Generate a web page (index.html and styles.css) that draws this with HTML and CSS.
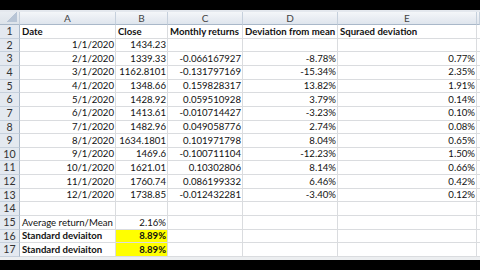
FILE: index.html
```html
<!DOCTYPE html>
<html>
<head>
<meta charset="utf-8">
<link rel="stylesheet" href="styles.css">
</head>
<body>
<div class="topbar"></div>
<div class="strip"></div>
<div class="sheet">
  <div class="ch corner"></div><div class="ch">A</div><div class="ch">B</div><div class="ch">C</div><div class="ch">D</div><div class="ch">E</div><div class="ch"></div>

  <div class="rh">1</div><div class="c b">Date</div><div class="c b">Close</div><div class="c b">Monthly returns</div><div class="c b">Deviation from mean</div><div class="c b">Squraed deviation</div><div class="c"></div>
  <div class="rh">2</div><div class="c r">1/1/2020</div><div class="c r">1434.23</div><div class="c r"></div><div class="c r"></div><div class="c r"></div><div class="c"></div>
  <div class="rh">3</div><div class="c r">2/1/2020</div><div class="c r">1339.33</div><div class="c r">-0.066167927</div><div class="c r">-8.78%</div><div class="c r">0.77%</div><div class="c"></div>
  <div class="rh">4</div><div class="c r">3/1/2020</div><div class="c r">1162.8101</div><div class="c r">-0.131797169</div><div class="c r">-15.34%</div><div class="c r">2.35%</div><div class="c"></div>
  <div class="rh">5</div><div class="c r">4/1/2020</div><div class="c r">1348.66</div><div class="c r">0.159828317</div><div class="c r">13.82%</div><div class="c r">1.91%</div><div class="c"></div>
  <div class="rh">6</div><div class="c r">5/1/2020</div><div class="c r">1428.92</div><div class="c r">0.059510928</div><div class="c r">3.79%</div><div class="c r">0.14%</div><div class="c"></div>
  <div class="rh">7</div><div class="c r">6/1/2020</div><div class="c r">1413.61</div><div class="c r">-0.010714427</div><div class="c r">-3.23%</div><div class="c r">0.10%</div><div class="c"></div>
  <div class="rh">8</div><div class="c r">7/1/2020</div><div class="c r">1482.96</div><div class="c r">0.049058776</div><div class="c r">2.74%</div><div class="c r">0.08%</div><div class="c"></div>
  <div class="rh">9</div><div class="c r">8/1/2020</div><div class="c r">1634.1801</div><div class="c r">0.101971798</div><div class="c r">8.04%</div><div class="c r">0.65%</div><div class="c"></div>
  <div class="rh">10</div><div class="c r">9/1/2020</div><div class="c r">1469.6</div><div class="c r">-0.100711104</div><div class="c r">-12.23%</div><div class="c r">1.50%</div><div class="c"></div>
  <div class="rh">11</div><div class="c r">10/1/2020</div><div class="c r">1621.01</div><div class="c r">0.10302806</div><div class="c r">8.14%</div><div class="c r">0.66%</div><div class="c"></div>
  <div class="rh">12</div><div class="c r">11/1/2020</div><div class="c r">1760.74</div><div class="c r">0.086199332</div><div class="c r">6.46%</div><div class="c r">0.42%</div><div class="c"></div>
  <div class="rh">13</div><div class="c r">12/1/2020</div><div class="c r">1738.85</div><div class="c r">-0.012432281</div><div class="c r">-3.40%</div><div class="c r">0.12%</div><div class="c"></div>
  <div class="rh">14</div><div class="c"></div><div class="c"></div><div class="c"></div><div class="c"></div><div class="c"></div><div class="c"></div>
  <div class="rh">15</div><div class="c">Average return/Mean</div><div class="c r">2.16%</div><div class="c"></div><div class="c"></div><div class="c"></div><div class="c"></div>
  <div class="rh">16</div><div class="c b">Standard deviaiton</div><div class="c r b y">8.89%</div><div class="c"></div><div class="c"></div><div class="c"></div><div class="c"></div>
  <div class="rh">17</div><div class="c b">Standard deviaiton</div><div class="c r b y">8.89%</div><div class="c"></div><div class="c"></div><div class="c"></div><div class="c"></div>
</div>
<div class="strip2"></div>
</body>
</html>
```

FILE: styles.css
```css
html, body {
  margin: 0;
  padding: 0;
  background: #000;
}
body {
  width: 480px;
  height: 270px;
  overflow: hidden;
  font-family: Lato, "Open Sans", sans-serif;
  font-size: 9.6px;
  color: #111;
}
.topbar {
  height: 10px;
  background: #000;
}
.strip {
  height: 2px;
  background: #e4e8ee;
}
.sheet {
  display: grid;
  grid-template-columns: 20px 96px 52px 75px 95px 139px 3px;
  grid-template-rows: 13px repeat(17, 1fr);
  height: 245px;
  background: #fff;
}
.ch {
  background: linear-gradient(#f4f6f9, #dfe5ed);
  border-right: 1px solid #c6d0dc;
  border-bottom: 1px solid #a9b8c9;
  display: flex;
  align-items: center;
  justify-content: center;
  color: #444;
  line-height: 1;
  font-size: 10px;
}
.corner {
  background:
    linear-gradient(135deg, transparent 50%, #b8c5d6 50%) right 2px bottom 2px / 11px 10px no-repeat,
    linear-gradient(#e9edf2, #dde3ea);
}
.rh {
  background: #e4e9f0;
  border-right: 1px solid #a9b8c9;
  border-bottom: 1px solid #c6d0dc;
  display: flex;
  align-items: center;
  justify-content: center;
  color: #333;
  line-height: 1;
  font-size: 10.6px;
}
.c {
  border-right: 1px solid #dadcdf;
  border-bottom: 1px solid #dadcdf;
  display: flex;
  align-items: center;
  padding: 0 1px 0 2px;
  white-space: nowrap;
  overflow: hidden;
  line-height: 1;
}
.r {
  justify-content: flex-end;
}
.b {
  font-weight: bold;
}
.y {
  background: #ffff00;
}
.strip2 {
  height: 3px;
  background: #eceef0;
}
```
